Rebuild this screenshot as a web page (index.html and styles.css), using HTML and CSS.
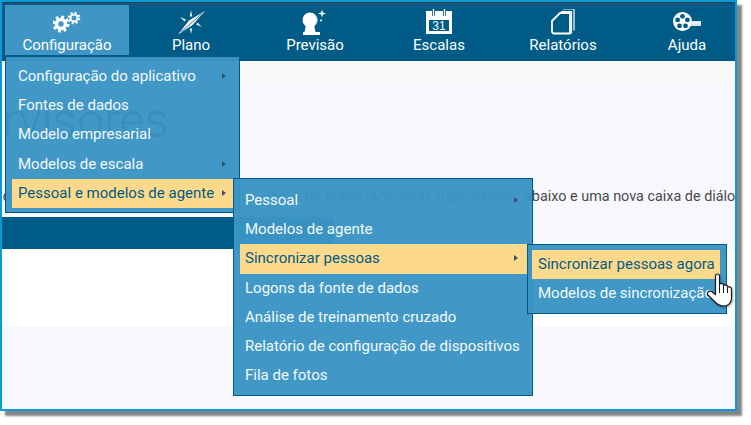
FILE: index.html
```html
<!DOCTYPE html>
<html lang="pt">
<head>
    <meta charset="UTF-8">
    <meta name="viewport" content="width=device-width, initial-scale=1.0">
    <title>Supervisores</title>
    <link rel="stylesheet" href="styles.css">
</head>
<body>
    <div class="frame">
        <nav class="topbar">
            <div class="tab tab-active">
                <svg class="tab-icon" width="28" height="27" viewBox="0 0 28 27">
                    <g fill="none" stroke="#fff">
                        <circle cx="8" cy="15" r="4.500" stroke-width="3.600"/>
                        <circle cx="8" cy="15" r="7.300" stroke-width="2.600" stroke-dasharray="2.900 2.830"/>
                        <circle cx="21" cy="9" r="3.500" stroke-width="2"/>
                        <circle cx="21" cy="9" r="5.300" stroke-width="2" stroke-dasharray="2.100 2.060"/>
                    </g>
                </svg>
                <span>Configuração</span>
            </div>
            <div class="tab">
                <svg class="tab-icon" width="28" height="27" viewBox="0 0 28 27">
                    <path d="M14 1l1.300 6.500-2.600 0zM14 25l-1.300-5.500 2.600 0zM3 8l6 2.500-1.500 2zM25 18l-6-2.500 1.500-2z" fill="#e4edf2"/>
                    <path d="M28 2L15.500 16 1 25.500 12 11.500z" fill="#fff"/>
                    <path d="M25 4.500L4 23" stroke="#005b87" stroke-width=".8"/>
                </svg>
                <span>Plano</span>
            </div>
            <div class="tab">
                <svg class="tab-icon" width="28" height="27" viewBox="0 0 28 27">
                    <circle cx="9" cy="11" r="7.500" fill="#fff"/>
                    <path d="M14.500 6.500a7 7 0 0 1 0 9" fill="none" stroke="#9fc0d2" stroke-width=".8"/>
                    <path d="M5 16h8l1.500 7h-11z" fill="#fff"/>
                    <path d="M2 23h17v3H2z" fill="#fff"/>
                    <path d="M21 .5l.9 3.100 3.100.9-3.100.9-.9 3.100-.9-3.100-3.100-.9 3.100-.9z" fill="#fff"/>
                    <circle cx="20" cy="11.500" r="1" fill="#fff"/>
                </svg>
                <span>Previsão</span>
            </div>
            <div class="tab">
                <svg class="tab-icon" width="28" height="27" viewBox="0 0 28 27">
                    <path d="M1 2h26v23H1z" fill="#fff"/>
                    <path d="M4 11h20v11H4z" fill="#005b87"/>
                    <path d="M7 0h3v7H7zM18 0h3v7h-3z" fill="#005b87"/>
                    <path d="M8.500 0v7M19.500 0v7" stroke="#fff" stroke-width="1.400"/>
                    <text x="14" y="21" class="cal-day">31</text>
                </svg>
                <span>Escalas</span>
            </div>
            <div class="tab">
                <svg class="tab-icon" width="24" height="27" viewBox="0 0 24 27">
                    <path d="M12 0h11v21.500" fill="none" stroke="#fff" stroke-width="1.200"/>
                    <path d="M10 2.500h10.500v22" fill="none" stroke="#fff" stroke-width="1.200"/>
                    <path d="M9 4h10v20.500H3a2 2 0 0 1-2-2V12z" fill="#005b87" stroke="#fff" stroke-width="1.800" stroke-linejoin="round"/>
                </svg>
                <span>Relatórios</span>
            </div>
            <div class="tab">
                <svg class="tab-icon" width="28" height="27" viewBox="0 0 28 27">
                    <circle cx="9.500" cy="12.500" r="9.500" fill="#fff"/>
                    <g fill="#005b87">
                        <circle cx="9.500" cy="7.300" r="2.400"/>
                        <circle cx="4.600" cy="10.900" r="2.400"/>
                        <circle cx="14.400" cy="10.900" r="2.400"/>
                        <circle cx="6.500" cy="16.900" r="2.400"/>
                        <circle cx="12.500" cy="16.900" r="2.400"/>
                    </g>
                    <path d="M18 12h10v5H18z" fill="#d5e3ea"/>
                    <path d="M19 14h9" stroke="#fff" stroke-width="1"/>
                </svg>
                <span>Ajuda</span>
            </div>
        </nav>

        <div class="page">
            <div class="page-strip"></div>
            <h1 class="page-title">Supervisores</h1>
            <p class="page-text">Para adicionar novos supervisores aos grupos, clique no botão "Adicionar supervisores" abaixo e uma nova caixa de diálogo será aberta</p>
            <div class="page-bar"></div>
            <div class="page-white"></div>
        </div>

        <ul class="menu menu-one">
            <li class="item has-sub">Configuração do aplicativo</li>
            <li class="item">Fontes de dados</li>
            <li class="item">Modelo empresarial</li>
            <li class="item has-sub">Modelos de escala</li>
            <li class="item item-on has-sub">Pessoal e modelos de agente</li>
        </ul>
        <ul class="menu menu-two">
            <li class="item has-sub">Pessoal</li>
            <li class="item">Modelos de agente</li>
            <li class="item item-on has-sub">Sincronizar pessoas</li>
            <li class="item">Logons da fonte de dados</li>
            <li class="item">Análise de treinamento cruzado</li>
            <li class="item">Relatório de configuração de dispositivos</li>
            <li class="item">Fila de fotos</li>
        </ul>
        <ul class="menu menu-three">
            <li class="item item-on">Sincronizar pessoas agora</li>
            <li class="item">Modelos de sincronização</li>
        </ul>

        <svg class="cursor" width="26" height="34" viewBox="0 0 26 34">
            <path d="M8.500 2.500C9 .5 12 .5 12.500 2.500V11.500C13 10 16 10 16.500 12V13C17 11.500 20 11.500 20.500 13.500V14.500C21 13.500 24 13.500 24.500 16V25C24.500 30 21 33 17 33C12 33 10 31 7 28L1 22C-.5 20 2 17 4.500 18.500L8.500 21.500Z" fill="#fff" stroke="#1a1a1a" stroke-width="1.200"/>
            <path d="M12.500 11.500V20M16.500 13V20M20.500 14.500V20" stroke="#1a1a1a" stroke-width="1"/>
        </svg>
    </div>
</body>
</html>
```
FILE: styles.css
```css
html, body {
    margin: 0;
    height: 100%;
    background: #fff;
    overflow: hidden;
}
body {
    font-family: Roboto, "Liberation Sans", sans-serif;
    font-size: 15px;
}
.frame {
    position: relative;
    box-sizing: border-box;
    width: 737px;
    height: 411px;
    border: 2px solid #0d99d8;
    background: #f7f8fe;
    box-shadow: 5px 5px 2px #858585;
}

/* top nav */
.topbar {
    display: flex;
    height: 59px;
    box-sizing: border-box;
    padding: 2px 0 0 3px;
    border-top: 1px solid #2c3e4a;
    background: #005b87;
    color: #fff;
    overflow: hidden;
}
.tab {
    flex: none;
    width: 124px;
    height: 50px;
    box-sizing: border-box;
    padding-top: 4px;
    display: flex;
    flex-direction: column;
    align-items: center;
    line-height: 18px;
}
.tab-active {
    background: #3f96c4;
}
.tab-icon {
    display: block;
    flex: none;
}
.cal-day {
    fill: #fff;
    font-family: "Liberation Sans", sans-serif;
    font-size: 12px;
    text-anchor: middle;
}

/* page behind the menus */
.page {
    height: 348px;
    overflow: hidden;
}
.page-strip {
    height: 23px;
    background: #f8f8f8;
}
.page-title {
    margin: 9px 0 0 -106px;
    font-weight: 300;
    font-size: 48px;
    line-height: 56px;
    color: #000;
    white-space: nowrap;
}
.page-text {
    margin: 38px 0 10px -40px;
    font-size: 14.400px;
    line-height: 20px;
    color: #4a4a4a;
    white-space: nowrap;
}
.page-bar {
    width: 332px;
    height: 32px;
    border-top-right-radius: 4px;
    background: #005b87;
}
.page-white {
    height: 78px;
    background: #fff;
}

/* flyout menus */
.menu {
    position: absolute;
    margin: 0;
    box-sizing: border-box;
    padding: 5px 6px 4px;
    list-style: none;
    background: rgba(58, 148, 196, 0.965);
    border: 1px solid #005b87;
    color: #f4f9fc;
    white-space: nowrap;
}
.menu-one {
    left: 3px;
    top: 54px;
    width: 235px;
}
.menu-two {
    left: 231px;
    top: 176px;
    width: 300px;
    padding: 7px 5px 5px 6px;
}
.menu-three {
    left: 525px;
    top: 242px;
    width: 200px;
    padding: 5px 6px 5px 4px;
}
.item {
    position: relative;
    height: 29.200px;
    line-height: 28.500px;
    padding-left: 6px;
}
.menu-two .item {
    padding-left: 5px;
}
.item-on {
    background: #fdd98b;
    color: #005b87;
}
.has-sub::after {
    content: "";
    position: absolute;
    right: 7px;
    top: 11px;
    border-left: 4px solid #33566b;
    border-top: 3.500px solid transparent;
    border-bottom: 3.500px solid transparent;
}
.menu-two .has-sub::after {
    right: 9px;
}
.cursor {
    position: absolute;
    left: 705px;
    top: 271px;
    filter: drop-shadow(1px 1px 1px rgba(0, 0, 0, 0.35));
}
```
